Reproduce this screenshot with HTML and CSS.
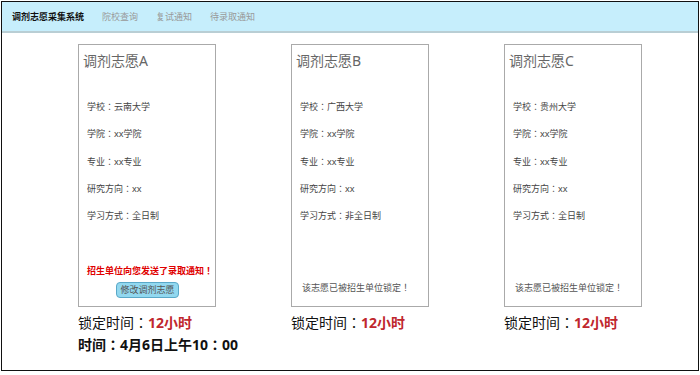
FILE: index.html
```html
<!DOCTYPE html>
<html lang="zh-CN">
<head>
<meta charset="utf-8">
<title>调剂志愿采集系统</title>
<link rel="stylesheet" href="styles.css">
</head>
<body>
<div class="frame">
  <nav class="navbar">
    <span class="brand">调剂志愿采集系统</span>
    <a class="nav-link">院校查询</a>
    <a class="nav-link">复试通知</a>
    <a class="nav-link">待录取通知</a>
  </nav>
  <main class="columns">
    <section class="column">
      <div class="card">
        <h2 class="card-title">调剂志愿A</h2>
        <ul class="fields">
          <li>学校：云南大学</li>
          <li>学院：xx学院</li>
          <li>专业：xx专业</li>
          <li>研究方向：xx</li>
          <li>学习方式：全日制</li>
        </ul>
        <div class="card-bottom">
          <p class="notice">招生单位向您发送了录取通知！</p>
          <button class="edit-btn">修改调剂志愿</button>
        </div>
      </div>
      <p class="lock">锁定时间：<span class="hours">12小时</span></p>
      <p class="time">时间：4月6日上午10：00</p>
    </section>
    <section class="column">
      <div class="card">
        <h2 class="card-title">调剂志愿B</h2>
        <ul class="fields">
          <li>学校：广西大学</li>
          <li>学院：xx学院</li>
          <li>专业：xx专业</li>
          <li>研究方向：xx</li>
          <li>学习方式：非全日制</li>
        </ul>
        <p class="locked">该志愿已被招生单位锁定！</p>
      </div>
      <p class="lock">锁定时间：<span class="hours">12小时</span></p>
    </section>
    <section class="column">
      <div class="card">
        <h2 class="card-title">调剂志愿C</h2>
        <ul class="fields">
          <li>学校：贵州大学</li>
          <li>学院：xx学院</li>
          <li>专业：xx专业</li>
          <li>研究方向：xx</li>
          <li>学习方式：全日制</li>
        </ul>
        <p class="locked">该志愿已被招生单位锁定！</p>
      </div>
      <p class="lock">锁定时间：<span class="hours">12小时</span></p>
    </section>
  </main>
</div>
</body>
</html>
```

FILE: styles.css
```css
* {
  box-sizing: border-box;
}

html, body {
  margin: 0;
  padding: 0;
  background: #fff;
}

body {
  font-family: "Noto Sans", "Noto Sans CJK JP", sans-serif;
  font-feature-settings: "locl" 0;
  color: #111;
}

.frame {
  margin: 1px 0 0 1px;
  width: 698px;
  height: 370px;
  border: 1px solid #111;
  overflow: hidden;
}

.navbar {
  display: flex;
  align-items: center;
  gap: 18px;
  height: 31px;
  padding: 0 0 0 10px;
  background: #c6eefc;
  border-bottom: 2px solid #b9ced4;
}

.brand {
  font-size: 9px;
  font-weight: bold;
  color: #111;
}

.nav-link {
  font-size: 9px;
  color: #999;
}

.columns {
  display: flex;
  gap: 75px;
  padding: 11px 0 0 76px;
}

.column {
  width: 138px;
}

.card {
  display: flex;
  flex-direction: column;
  height: 263px;
  border: 1px solid #aaa;
  padding: 7px 4px 8px 4px;
}

.card-title {
  margin: 0;
  font-size: 14px;
  line-height: 18px;
  font-weight: normal;
  color: #666;
}

.fields {
  list-style: none;
  margin: 31px 0 0 0;
  padding: 0 0 0 4px;
  display: flex;
  flex-direction: column;
  gap: 15.3px;
  font-size: 9px;
  line-height: 12px;
  color: #444;
}

.card-bottom {
  margin-top: auto;
  padding-left: 4px;
}

.notice {
  margin: 0;
  font-size: 9px;
  line-height: 12px;
  font-weight: bold;
  color: #e00000;
  white-space: nowrap;
}

.edit-btn {
  display: block;
  margin: 5px 0 0 29px;
  width: 63px;
  height: 16px;
  padding: 0;
  border: 1px solid #5aa8c8;
  border-radius: 4px;
  background: #92d8ef;
  font-family: inherit;
  font-feature-settings: inherit;
  font-size: 9px;
  line-height: 14px;
  color: #555;
}

.locked {
  margin: auto 0 4px 0;
  padding-left: 6px;
  font-size: 9px;
  line-height: 12px;
  color: #555;
  white-space: nowrap;
}

.lock {
  margin: 5px 0 0 0;
  font-size: 14px;
  line-height: 22px;
  color: #111;
  white-space: nowrap;
}

.hours {
  color: #c0272d;
  font-weight: bold;
}

.time {
  margin: 0;
  font-size: 14px;
  line-height: 22px;
  font-weight: bold;
  color: #111;
  white-space: nowrap;
}
```
